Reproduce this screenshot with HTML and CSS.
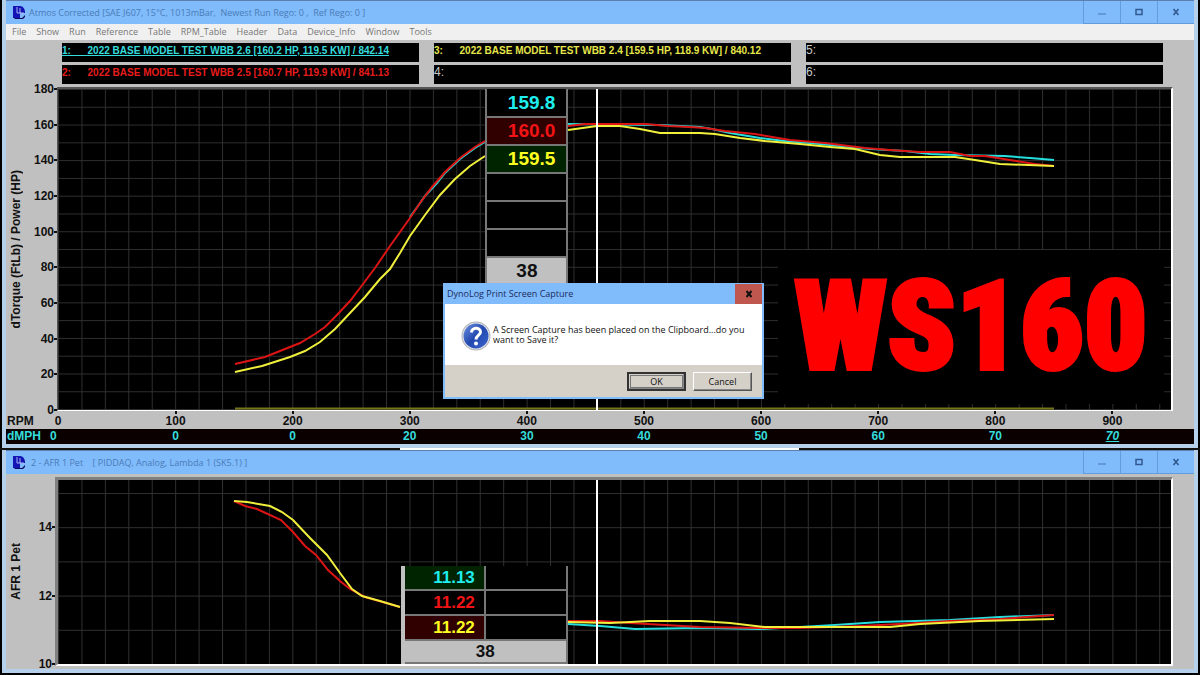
FILE: index.html
```html
<!DOCTYPE html>
<html lang="en">
<head>
<meta charset="utf-8">
<title>DynoLog</title>
<link rel="stylesheet" href="styles.css">
</head>
<body>
<svg class="defs" aria-hidden="true">
  <defs>
    <symbol id="app-icon" viewBox="0 0 14 15">
      <path d="M1 1h7c3 0 5 3 5 6v1H8v5H1z" fill="#1414b4"/>
      <path d="M5 2v6h4M8 3v5h4" stroke="#a8b4f4" stroke-width="1" fill="none"/>
      <path d="M2 13h8l3-3v2l-2 2H3z" fill="#0a0a60"/>
    </symbol>
    <symbol id="icon-min" viewBox="0 0 10 10"><path d="M1 7h8" stroke="#4a79b4" stroke-width="1"/></symbol>
    <symbol id="icon-max" viewBox="0 0 10 10"><path d="M2 2.500h6v5H2z" fill="none" stroke="#31598f" stroke-width="1.500"/></symbol>
    <symbol id="icon-close" viewBox="0 0 10 10"><path d="M2.500 2l5 6M7.500 2l-5 6" stroke="#31598f" stroke-width="1.600"/></symbol>
    <pattern id="grid-power" x="58" y="89" width="23.430" height="17.780" patternUnits="userSpaceOnUse">
      <path d="M.5 0v18M0 .5h24" stroke="#2e2e2e" stroke-width="1"/>
    </pattern>
    <pattern id="grid-afr" x="58" y="493" width="23.430" height="34.200" patternUnits="userSpaceOnUse">
      <path d="M.5 0v35M0 .5h24" stroke="#303030" stroke-width="1"/>
    </pattern>
  </defs>
</svg>

<main class="desktop">
  <section class="window">
    <header class="titlebar">
      <svg class="app-icon"><use href="#app-icon"/></svg>
      <h1 class="title">Atmos Corrected [SAE J607, 15°C, 1013mBar,&nbsp; Newest Run Rego: 0 ,&nbsp; Ref Rego: 0 ]</h1>
      <div class="window-buttons">
        <button aria-label="Minimize"><svg><use href="#icon-min"/></svg></button>
        <button aria-label="Maximize"><svg><use href="#icon-max"/></svg></button>
        <button aria-label="Close"><svg><use href="#icon-close"/></svg></button>
      </div>
    </header>
    <nav class="menu">
      <button>File</button><button>Show</button><button>Run</button><button>Reference</button><button>Table</button><button>RPM_Table</button><button>Header</button><button>Data</button><button>Device_Info</button><button>Window</button><button>Tools</button>
    </nav>
    <div class="runs">
      <div class="run run-cyan">1:      2022 BASE MODEL TEST WBB 2.6 [160.2 HP, 119.5 KW] / 842.14</div>
      <div class="run run-yellow">3:      2022 BASE MODEL TEST WBB 2.4 [159.5 HP, 118.9 KW] / 840.12</div>
      <div class="run run-empty">5:</div>
      <div class="run run-red">2:      2022 BASE MODEL TEST WBB 2.5 [160.7 HP, 119.9 KW] / 841.13</div>
      <div class="run run-empty">4:</div>
      <div class="run run-empty">6:</div>
    </div>
    <div class="chart chart-power">
      <div class="axis-name"><span>dTorque (FtLb) / Power (HP)</span></div>
      <div class="y-axis"><span>180</span><span>160</span><span>140</span><span>120</span><span>100</span><span>80</span><span>60</span><span>40</span><span>20</span><span>0</span></div>
      <div class="plot">
        <svg class="plot-lines" viewBox="58 89 1113 321" preserveAspectRatio="none">
          <rect x="58" y="89" width="1113" height="321" fill="url(#grid-power)"/>
          <path d="M235 408.500H1054" stroke="#75751a" stroke-width="2"/>
          <g class="curves">
            <path class="cyan" d="M410 217L418 206 425 196 437 183 445 173 460 159 475 148 485 142M568 124L660 125 700 127 712 129 730 133 760 138 785 141 810 143 840 146 870 149 905 151 930 154 955 155 1005 156 1030 158 1054 160"/>
            <path class="red" d="M235 364L265 357 300 343 315 334 325 327 335 317 350 301 360 288 375 268 390 246 410 218 420 203 432 187 445 172 460 158 475 147 485 141M568 126L585 124 645 124 668 126 690 127 705 128 725 131 755 134 790 140 825 143 865 148 890 150 920 152 950 152 970 156 985 156 1010 160 1035 164 1054 166"/>
            <path class="yellow" d="M235 372L262 366 290 357 305 351 320 342 335 329 350 313 365 297 380 279 390 269 400 253 410 236 425 215 440 195 455 179 470 166 485 156M568 130L597 126 620 126 640 129 660 133 700 133 715 134 740 138 765 141 800 144 830 147 855 149 880 155 900 157 955 157 975 160 1000 164 1054 166"/>
          </g>
          <path d="M597 89V410" stroke="#fff" stroke-width="2"/>
        </svg>
        <table class="readout readout-power">
          <tr><td class="cyan">159.8</td></tr>
          <tr><td class="red on-red">160.0</td></tr>
          <tr><td class="yellow on-green">159.5</td></tr>
          <tr><td></td></tr>
          <tr><td></td></tr>
          <tr><td></td></tr>
          <tr><th>38</th></tr>
        </table>
        <div class="banner">WS160</div>
      </div>
    </div>
    <div class="x-axis">
      <div class="x-head"><span>RPM</span><span>0</span></div><span>100</span><span>200</span><span>300</span><span>400</span><span>500</span><span>600</span><span>700</span><span>800</span><span>900</span>
    </div>
    <div class="x-axis speed">
      <div class="x-head"><span>dMPH</span><span>0</span></div><span>0</span><span>0</span><span>20</span><span>30</span><span>40</span><span>50</span><span>60</span><span>70</span><span><em>70</em></span>
    </div>
  </section>

  <div class="divider"></div>

  <section class="window window-afr">
    <header class="titlebar">
      <svg class="app-icon"><use href="#app-icon"/></svg>
      <h2 class="title">2 - AFR 1 Pet &nbsp;&nbsp; [ PIDDAQ, Analog, Lambda 1 (SK5.1) ]</h2>
      <div class="window-buttons">
        <button aria-label="Minimize"><svg><use href="#icon-min"/></svg></button>
        <button aria-label="Maximize"><svg><use href="#icon-max"/></svg></button>
        <button aria-label="Close"><svg><use href="#icon-close"/></svg></button>
      </div>
    </header>
    <div class="chart chart-afr">
      <div class="axis-name"><span>AFR 1 Pet</span></div>
      <div class="y-axis"><span>14</span><span>12</span><span>10</span></div>
      <div class="plot">
        <svg class="plot-lines" viewBox="58 480 1113 184" preserveAspectRatio="none">
          <rect x="58" y="480" width="1113" height="184" fill="url(#grid-afr)"/>
          <g class="curves">
            <path class="cyan" d="M568 624L600 626 635 629 700 628 760 629 800 627 835 625 880 622 950 620 1000 617 1054 615"/>
            <path class="red" d="M234 501L245 506 257 509 281 520 293 532 305 546 316 555 328 570 340 581 350 589 365 597 400 607M568 621L600 621 630 623 700 627 760 628 800 628 860 626 900 624 950 621 1000 619 1040 616 1054 615"/>
            <path class="yellow" d="M234 501L247 502 270 506 282 512 293 520 310 538 327 555 340 573 352 589 362 596 380 601 400 607M568 622L610 623 650 621 700 621 730 623 765 627 800 627 890 627 920 624 980 621 1054 619"/>
          </g>
          <path d="M597 480V664" stroke="#fff" stroke-width="2"/>
        </svg>
        <table class="readout readout-afr">
          <tr><td class="cyan on-green">11.13</td><td></td></tr>
          <tr><td class="red">11.22</td><td></td></tr>
          <tr><td class="yellow on-red">11.22</td><td></td></tr>
          <tr><th colspan="2">38</th></tr>
        </table>
      </div>
    </div>
  </section>
</main>

<div class="dialog" role="dialog" aria-labelledby="dialog-title">
  <div class="dialog-title">
    <span id="dialog-title">DynoLog Print Screen Capture</span>
    <button class="dialog-close" aria-label="Close"><svg viewBox="0 0 10 10"><path d="M2.500 2l5 6M7.500 2l-5 6" stroke="#111" stroke-width="2"/></svg></button>
  </div>
  <div class="dialog-body">
    <svg class="question" viewBox="0 0 30 32">
      <defs>
        <linearGradient id="ball" x1="0" y1="0" x2="1" y2="1"><stop offset="0" stop-color="#6f92e0"/><stop offset=".5" stop-color="#2349b0"/><stop offset="1" stop-color="#3c66cf"/></linearGradient>
      </defs>
      <circle cx="15" cy="16" r="14.500" fill="#aeb2b8"/>
      <circle cx="15" cy="16" r="13.500" fill="#e2e4e8"/>
      <circle cx="15" cy="16" r="12.500" fill="url(#ball)"/>
      <path d="M10.500 12.500C10.500 7 19.500 7 19.500 12c0 3.500-4.500 3.500-4.500 7.500" fill="none" stroke="#fff" stroke-width="3"/>
      <circle cx="15" cy="23.500" r="2" fill="#fff"/>
    </svg>
    <p>A Screen Capture has been placed on the Clipboard...do you want to Save it?</p>
  </div>
  <div class="dialog-actions">
    <button class="btn btn-default">OK</button>
    <button class="btn">Cancel</button>
  </div>
</div>
</body>
</html>
```

FILE: styles.css
```css
* { box-sizing: border-box; }

body {
  margin: 0;
  background: #000;
  font: bold 12px/14px "Liberation Sans", Arial, sans-serif;
  color: #111;
}

button { font: inherit; color: inherit; padding: 0; border: 0; background: none; }

.defs { position: absolute; width: 0; height: 0; }

.desktop { display: flex; flex-direction: column; }

.window {
  margin: 0 2px;
  border: solid #b5d0ea;
  border-width: 0 4px 4px;
  background: #c0c0c0;
}

/* Title bar and menu */
.titlebar {
  display: flex;
  align-items: center;
  height: 24px;
  padding-left: 6px;
  gap: 3px;
  border-top: 1px solid #5c7fae;
  background: #80bbfb;
}
.window-afr .titlebar { gap: 5px; }
.app-icon { width: 14px; height: 15px; }
.title {
  flex: 1;
  margin: 0;
  font: 9px/14px "Open Sans", "Noto Sans", sans-serif;
  color: #4a7cb8;
  white-space: nowrap;
}
.window-buttons { display: flex; align-self: stretch; }
.window-buttons button {
  display: grid;
  place-items: center;
  width: 37px;
  border-left: 1px solid #649bdb;
  border-bottom: 1px solid #649bdb;
}
.window-buttons svg { width: 10px; height: 10px; }

.menu {
  display: flex;
  gap: 10px;
  height: 16px;
  padding-left: 6px;
  background: #f0f0f0;
  font: 9px/16px "Open Sans", "Noto Sans", sans-serif;
  color: #777;
}

/* Run headers */
.runs {
  display: grid;
  grid-template-columns: repeat(3, 1fr);
  gap: 3px 15px;
  padding: 3px 31px 3px 56px;
}
.run {
  height: 19px;
  background: #000;
  font-size: 10px;
  line-height: 15px;
  white-space: pre;
  overflow: hidden;
}
.run-cyan { color: #35dcdc; text-decoration: underline; }
.run-red { color: #e81c1c; }
.run-yellow { color: #e6e64a; }
.run-empty { color: #c8c8c8; font-size: 12px; font-weight: normal; }

/* Charts */
.chart { display: flex; padding-right: 21px; }
.axis-name { display: grid; place-items: center; width: 20px; }
.axis-name span { writing-mode: vertical-rl; transform: rotate(180deg); white-space: nowrap; }

.y-axis {
  display: flex;
  flex-direction: column;
  justify-content: space-between;
  text-align: right;
}
.y-axis span { display: flex; align-items: center; justify-content: flex-end; }
.y-axis span::after { content: ""; width: 3px; height: 2px; background: #111; }
.chart-power .y-axis { width: 31px; margin: -5px 0 -6px; }
.chart-afr .y-axis { width: 29px; margin: 43px 0 -5px; }

.plot {
  position: relative;
  flex: 1;
  background: #000;
  border: solid #fff;
}
.chart-power .plot { height: 324px; border-width: 2px 2px 1px 1px; border-color: #555 #fff #fff #555; }
.chart-afr { padding-top: 3px; padding-bottom: 3px; }
.chart-afr .plot { height: 189px; border-width: 3px 2px 2px 3px; border-color: #808080 #fff #fff #808080; }
.plot-lines { display: block; width: 100%; height: 100%; }
.curves { fill: none; stroke-width: 2; }
.curves .cyan { stroke: #25dede; }
.curves .red { stroke: #dc1414; }
.curves .yellow { stroke: #f0f03c; }

.readout {
  position: absolute;
  border-collapse: collapse;
  background: #000;
  table-layout: fixed;
}
.readout td, .readout th { padding: 0; border: 2px solid #777; }
.readout th { background: #c0c0c0; color: #111; text-align: center; }
.readout td { text-align: right; }
.readout .cyan { color: #1eeeee; }
.readout .red { color: #f01414; }
.readout .yellow { color: #ffff20; }
.on-red { background: #300000; }
.on-green { background: #002400; }

.readout-power { left: 38.4%; top: 0; width: 83px; font-size: 19px; line-height: 22px; }
.readout-power tr { height: 28px; }
.readout-power td { padding-right: 11px; }
.readout-power tr:first-child td, .readout-afr tr:first-child td { border-top: 0; }
.readout-afr { left: 30.8%; bottom: 0; width: 167px; font-size: 17px; line-height: 20px; border-left: 4px solid #c0c0c0; }
.readout-afr tr { height: 25px; }
.readout-afr tr:first-child { height: 24px; }
.readout-afr tr:last-child { height: 23px; }
.readout-afr td { padding-right: 9px; }

.banner {
  position: absolute;
  right: 7px;
  bottom: 6px;
  display: grid;
  place-items: center;
  width: 386px;
  height: 154px;
  background: #000;
  color: #f00;
  font: 900 125px/150px Impact, "Roboto Condensed", "Liberation Sans Narrow", sans-serif;
  -webkit-text-stroke: 4px #f00;
}

.x-axis {
  display: grid;
  grid-template-columns: 111px repeat(9, 1fr);
  padding-right: 23px;
  height: 18px;
  line-height: 15px;
  text-align: center;
}
.x-axis > span::before {
  content: "";
  display: block;
  width: 2px;
  height: 3px;
  margin: 0 auto;
  background: #111;
}
.x-head { display: flex; gap: 21px; padding: 3px 0 0 1px; }
.speed { height: 15px; background: #0a0000; color: #35dcdc; }
.speed > span::before { display: none; }
.speed .x-head { padding-top: 0; gap: 9px; }
.speed em { text-decoration: underline; }

.divider {
  height: 2px;
  background: linear-gradient(90deg, #111 33.3%, #fff 33.3% 66.6%, #111 66.6%);
}

/* Message box */
.dialog {
  position: absolute;
  left: 443px;
  top: 283px;
  width: 321px;
  border: 2px solid #80bbfb;
  border-top: 0;
  background: #fff;
  font: 9px/10px "Open Sans", "Noto Sans", sans-serif;
}
.dialog-title {
  display: flex;
  align-items: center;
  justify-content: space-between;
  height: 21px;
  padding-left: 2px;
  background: #80bbfb;
  color: #1c2c60;
}
.dialog-close { display: grid; place-items: center; width: 27px; height: 20px; background: #c0574f; }
.dialog-close svg { width: 10px; height: 10px; }
.dialog-body { display: flex; gap: 2px; height: 61px; padding: 16px 16px 0; }
.dialog-body p { margin: 5px 0; }
.question { flex: none; width: 30px; height: 32px; }
.dialog-actions {
  display: flex;
  justify-content: flex-end;
  gap: 7px;
  padding: 7px 10px 6px;
  background: #d5d0c8;
}
.btn {
  width: 59px;
  height: 19px;
  background: #d5d0c8;
  border: 1px solid;
  border-color: #fff #555 #555 #fff;
  box-shadow: inset -1px -1px #888;
}
.btn-default { border: 2px solid #333; outline: 1px solid #777; outline-offset: -4px; }
```
